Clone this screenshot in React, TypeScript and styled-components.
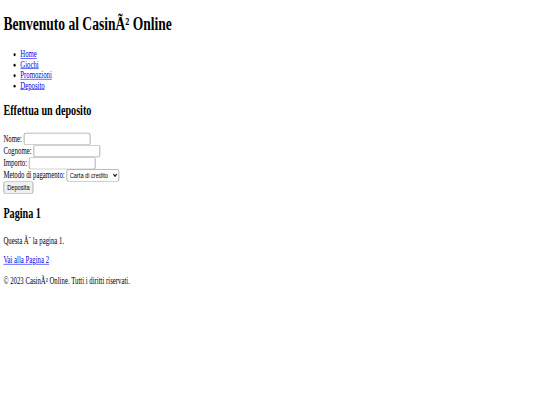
import React from 'react';
import { styled, createGlobalStyle } from "styled-components";

const GlobalStyle = createGlobalStyle`
html, body {
  margin: 0;
  padding: 0;
  background: #fff;
  overflow: hidden;
}
`;

const Frame = styled.div`
width: 540px;
height: 405px;
overflow: hidden;
`;

// the reference is a wide page squeezed into the small window
const Page = styled.div`
width: 1277px;
height: 698px;
box-sizing: border-box;
padding: 8px;
transform-origin: 0 0;
transform: scale(0.423, 0.58);
font-family: "Liberation Serif", "Times New Roman", serif;
font-size: 16px;
color: #000;
`;

const Title = styled.h1`
font-size: 32px;
font-weight: bold;
margin: 14px 0 26px;
`;

const NavList = styled.ul`
margin: 0 0 20px;
padding-left: 40px;
list-style: disc;
`;

const NavLink = styled.a`
color: #0000ee;
text-decoration: underline;
`;

const SectionTitle = styled.h2`
font-size: 24px;
font-weight: bold;
margin: 20px 0 25px;
`;

const DepositForm = styled.form`
margin: 0;
`;

const Row = styled.div`
display: block;
`;

// borders are thicker here so they stay about 1px after the squeeze
const control = `
box-sizing: border-box;
height: 21px;
border-style: solid;
border-color: #a4a4a4;
border-width: 1.7px 2.4px;
border-radius: 5px / 3.4px;
font-family: "Liberation Sans", Arial, sans-serif;
font-size: 13.33px;
vertical-align: baseline;
`;

const TextInput = styled.input`
${control}
width: 158px;
padding: 1px 2px;
background: #fff;
`;

const Select = styled.select`
${control}
width: 125px;
padding: 0 0 0 2px;
background-color: #fff;
color: #000;
`;

const SubmitButton = styled.button`
${control}
width: 71px;
padding: 1px 6px;
background: #efefef;
color: #000;
`;

const Paragraph = styled.p`
margin: 16px 0;
`;

const Footer = styled.footer`
display: block;
margin-top: 18px;
`;

const navItems = ["Home", "Giochi", "Promozioni", "Deposito"];

const App = () => {
  return (
    <>
      <GlobalStyle />
      <Frame>
        <Page>
          <header>
            <Title>Benvenuto al CasinÃ² Online</Title>
            <nav>
              <NavList>
                {navItems.map((item) => (
                  <li key={item}>
                    <NavLink href="#">{item}</NavLink>
                  </li>
                ))}
              </NavList>
            </nav>
          </header>

          <section>
            <SectionTitle>Effettua un deposito</SectionTitle>
            <DepositForm onSubmit={(e) => e.preventDefault()}>
              <Row>
                <label htmlFor="nome">Nome:</label> <TextInput type="text" id="nome" />
              </Row>
              <Row>
                <label htmlFor="cognome">Cognome:</label> <TextInput type="text" id="cognome" />
              </Row>
              <Row>
                <label htmlFor="importo">Importo:</label> <TextInput type="text" id="importo" />
              </Row>
              <Row>
                <label htmlFor="metodo">Metodo di pagamento:</label>{" "}
                <Select id="metodo" defaultValue="carta">
                  <option value="carta">Carta di credito</option>
                  <option value="paypal">PayPal</option>
                  <option value="bonifico">Bonifico</option>
                </Select>
              </Row>
              <Row>
                <SubmitButton type="submit">Deposita</SubmitButton>
              </Row>
            </DepositForm>
          </section>

          <section>
            <SectionTitle>Pagina 1</SectionTitle>
            <Paragraph>Questa Ã¨ la pagina 1.</Paragraph>
            <Paragraph>
              <NavLink href="#">Vai alla Pagina 2</NavLink>
            </Paragraph>
          </section>

          <Footer>
            <Paragraph>© 2023 CasinÃ² Online. Tutti i diritti riservati.</Paragraph>
          </Footer>
        </Page>
      </Frame>
    </>
  );
};

export default App;
